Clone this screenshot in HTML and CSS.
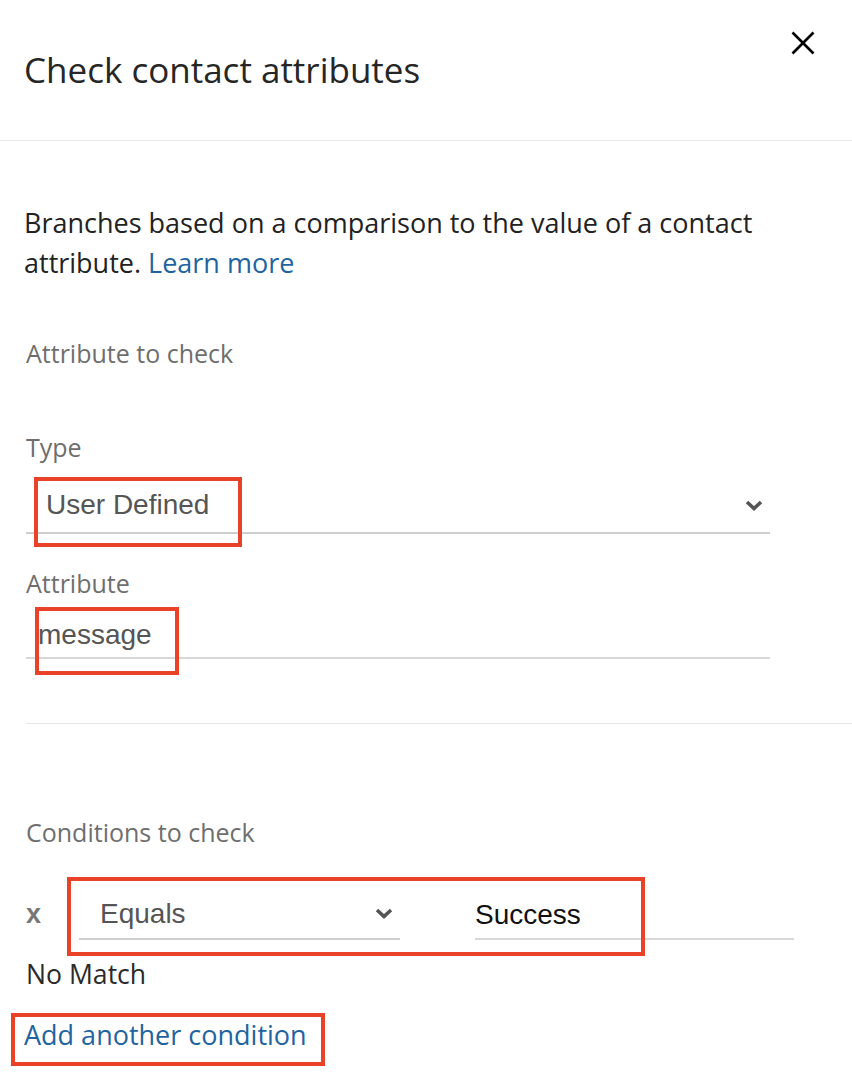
FILE: index.html
```html
<!DOCTYPE html>
<html lang="en">
<head>
<meta charset="utf-8">
<title>Check contact attributes</title>
<link rel="stylesheet" href="styles.css">
</head>
<body>
<div class="panel">
  <header class="header">
    <h1 class="title">Check contact attributes</h1>
    <button class="close" aria-label="Close">
      <svg width="24" height="24" viewBox="0 0 24 24"><path d="M1.5 1.5 L22.5 22.5 M22.5 1.5 L1.5 22.5" stroke="#000" stroke-width="2.6" fill="none"/></svg>
    </button>
  </header>

  <p class="desc">Branches based on a comparison to the value of a contact attribute. <a class="link" href="#">Learn more</a></p>

  <div class="section-label">Attribute to check</div>

  <div class="form">
    <div class="label label-type">Type</div>
    <div class="field select field-type">
      <span class="value muted">User Defined</span>
      <svg class="chevron" width="18" height="11" viewBox="0 0 18 11"><path d="M2 2 L9 8.5 L16 2" stroke="#545454" stroke-width="3.6" fill="none"/></svg>
      <span class="mark mark-type"></span>
    </div>

    <div class="label label-attr">Attribute</div>
    <div class="field field-attr">
      <span class="value muted msg">message</span>
      <span class="mark mark-attr"></span>
    </div>
  </div>

  <div class="separator"></div>

  <div class="section-label cond-label">Conditions to check</div>

  <div class="cond-row">
    <span class="remove">x</span>
    <div class="field select field-op">
      <span class="value muted op">Equals</span>
      <svg class="chevron chevron-op" width="18" height="11" viewBox="0 0 18 11"><path d="M2 2 L9 8.5 L16 2" stroke="#545454" stroke-width="3.6" fill="none"/></svg>
    </div>
    <div class="field field-val">
      <span class="value dark">Success</span>
    </div>
    <span class="mark mark-cond"></span>
  </div>

  <div class="nomatch">No Match</div>

  <div class="add">
    <a class="link" href="#">Add another condition</a>
    <span class="mark mark-add"></span>
  </div>
</div>
</body>
</html>
```

FILE: styles.css
```css
* { box-sizing: border-box; }
html, body { margin: 0; padding: 0; background: #fff; }
body {
  width: 852px;
  height: 1086px;
  overflow: hidden;
  font-family: "Open Sans", "Noto Sans", sans-serif;
  color: #222;
}
.panel { width: 852px; }

.header {
  height: 141px;
  border-bottom: 1px solid #eaeaea;
  display: flex;
  justify-content: space-between;
  align-items: flex-start;
  padding: 31px 37px 0 24px;
}
.title {
  margin: 18px 0 0 0;
  font-size: 35px;
  line-height: 42px;
  font-weight: 400;
  color: #262626;
}
.close {
  border: 0;
  background: none;
  padding: 0;
  width: 24px;
  height: 24px;
  display: block;
}
.close svg { display: block; }

.desc {
  margin: 62px 0 0 0;
  padding: 0 60px 0 24px;
  font-size: 27px;
  line-height: 40px;
  color: #222;
}
.link { color: #1f64a0; text-decoration: none; }

.section-label {
  margin: 53px 0 0 26px;
  font-size: 25px;
  line-height: 35px;
  color: #6e6e6e;
}

.form { width: 770px; padding-left: 26px; }
.label {
  font-size: 25px;
  line-height: 35px;
  color: #6e6e6e;
}
.label-type { margin-top: 59px; }
.label-attr { margin-top: 32px; }

.field {
  position: relative;
  border-bottom: 2px solid #cfcfcf;
  font-family: "Liberation Sans", Arial, sans-serif;
  font-size: 28px;
  line-height: 34px;
}
.field-type { margin-top: 23px; padding: 0 0 10px 20px; }
.field-attr { margin-top: 17px; padding: 0 0 5px 12px; border-bottom-color: #d8d8d8; }
.muted { color: #555; }
.dark { color: #111; }
.value { display: block; }

.chevron { position: absolute; right: 7px; top: 12px; }

.mark {
  position: absolute;
  border: 4px solid #ea4129;
  pointer-events: none;
}
.mark-type { left: 8px; top: -11px; width: 208px; height: 70px; }
.mark-attr { left: 9px; top: -11px; width: 144px; height: 68px; }

.separator {
  margin: 64px 0 0 26px;
  height: 1px;
  background: #e6e6e6;
}
.cond-label { margin-top: 91px; }

.cond-row {
  position: relative;
  margin: 47px 0 0 26px;
  display: flex;
  align-items: flex-start;
}
.remove {
  width: 53px;
  font-family: "Liberation Sans", Arial, sans-serif;
  font-weight: 700;
  font-size: 27px;
  line-height: 34px;
  color: #777;
}
.field-op { width: 321px; padding: 0 0 7px 21px; }
.chevron-op { top: 11px; }
.field-val { width: 319px; margin-left: 75px; padding: 1px 0 6px 0; border-bottom-color: #d8d8d8; }
.mark-cond { left: 41px; top: -20px; width: 578px; height: 79px; }

.nomatch {
  margin: 16px 0 0 26px;
  font-size: 26.6px;
  line-height: 36px;
  color: #2b2b2b;
}
.add {
  position: relative;
  margin: 24px 0 0 24px;
  font-size: 27px;
  line-height: 38px;
  width: max-content;
}
.mark-add { left: -13px; top: -3px; width: 314px; height: 53px; }
```
